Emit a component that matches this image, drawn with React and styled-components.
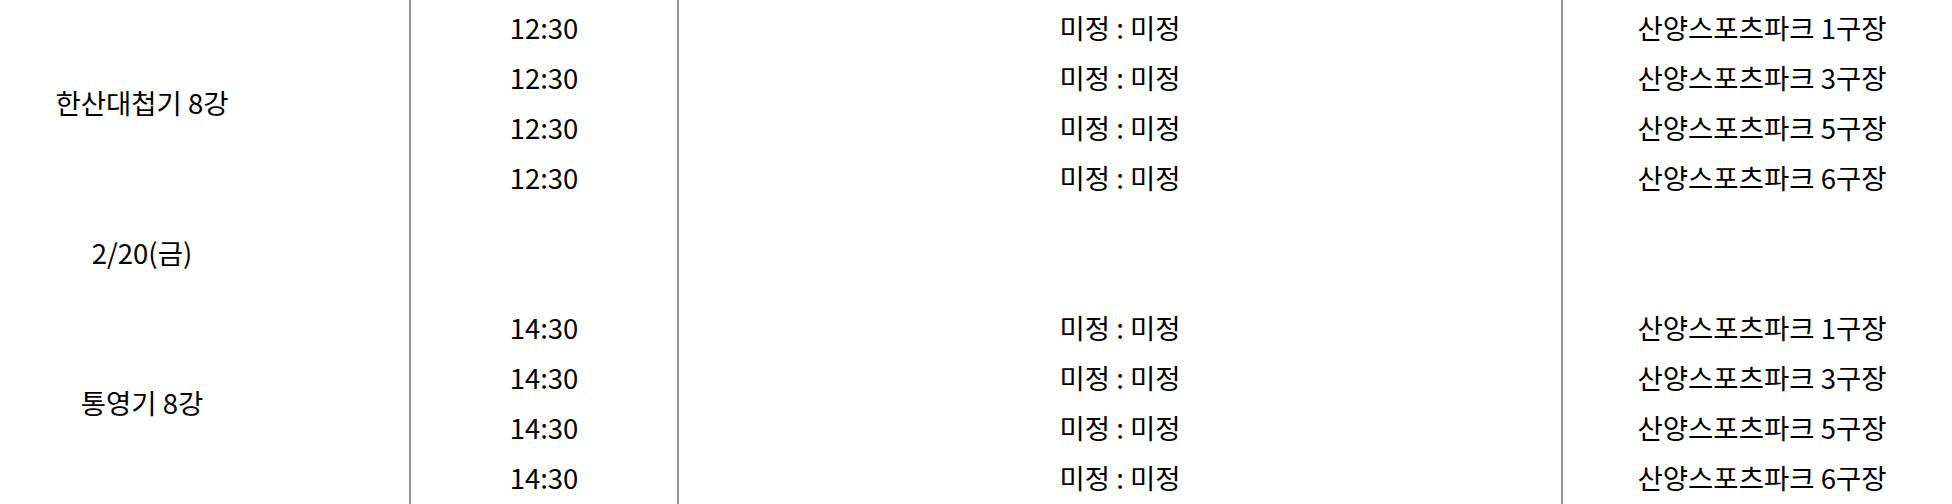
import React from "react";
import styled, { createGlobalStyle } from "styled-components";

const GlobalStyle = createGlobalStyle`
  html, body {
    margin: 0;
    padding: 0;
    background: #ffffff;
    overflow: hidden;
  }
  body {
    font-family: "Noto Sans CJK KR", "Noto Sans", sans-serif;
    color: #000000;
  }
`;

const Viewport = styled.div`
  width: 100%;
  height: 100vh;
  overflow: hidden;
`;

const ScheduleGrid = styled.div`
  display: grid;
  grid-template-columns: 534px 268px 884px 400px;
  grid-template-rows: repeat(10, 50px) 1fr;
  min-height: 100vh;
  margin-left: -125px;
  width: max-content;
`;

const Cell = styled.div`
  grid-column: ${(p) => p.$col};
  grid-row: ${(p) => p.$row} / span ${(p) => p.$span || 1};
  box-sizing: border-box;
  display: flex;
  align-items: center;
  justify-content: center;
  padding-top: 6px;
  font-size: 27.5px;
  line-height: 1.45;
  white-space: nowrap;
  border-left: ${(p) => (p.$col > 1 ? "2px solid #999999" : "none")};
`;

const groups = [
  {
    label: "한산대첩기 8강",
    time: "12:30",
    venues: ["1", "3", "5", "6"],
  },
  {
    label: "통영기 8강",
    time: "14:30",
    venues: ["1", "3", "5", "6"],
  },
];

export default function App() {
  const cells = [];
  let row = 1;
  groups.forEach((g, gi) => {
    cells.push(
      <Cell key={`label-${gi}`} $col={1} $row={row} $span={g.venues.length}>
        {g.label}
      </Cell>
    );
    g.venues.forEach((v, vi) => {
      const r = row + vi;
      cells.push(
        <Cell key={`t-${gi}-${vi}`} $col={2} $row={r}>
          {g.time}
        </Cell>,
        <Cell key={`m-${gi}-${vi}`} $col={3} $row={r}>
          미정 : 미정
        </Cell>,
        <Cell key={`v-${gi}-${vi}`} $col={4} $row={r}>
          {`산양스포츠파크 ${v}구장`}
        </Cell>
      );
    });
    row += g.venues.length;
    if (gi === 0) {
      cells.push(
        <Cell key="date" $col={1} $row={row} $span={2}>
          2/20(금)
        </Cell>,
        <Cell key="gap-2" $col={2} $row={row} $span={2} />,
        <Cell key="gap-3" $col={3} $row={row} $span={2} />,
        <Cell key="gap-4" $col={4} $row={row} $span={2} />
      );
      row += 2;
    }
  });
  cells.push(
    <Cell key="fill-2" $col={2} $row={row} />,
    <Cell key="fill-3" $col={3} $row={row} />,
    <Cell key="fill-4" $col={4} $row={row} />
  );

  return (
    <>
      <GlobalStyle />
      <Viewport>
        <ScheduleGrid>{cells}</ScheduleGrid>
      </Viewport>
    </>
  );
}
